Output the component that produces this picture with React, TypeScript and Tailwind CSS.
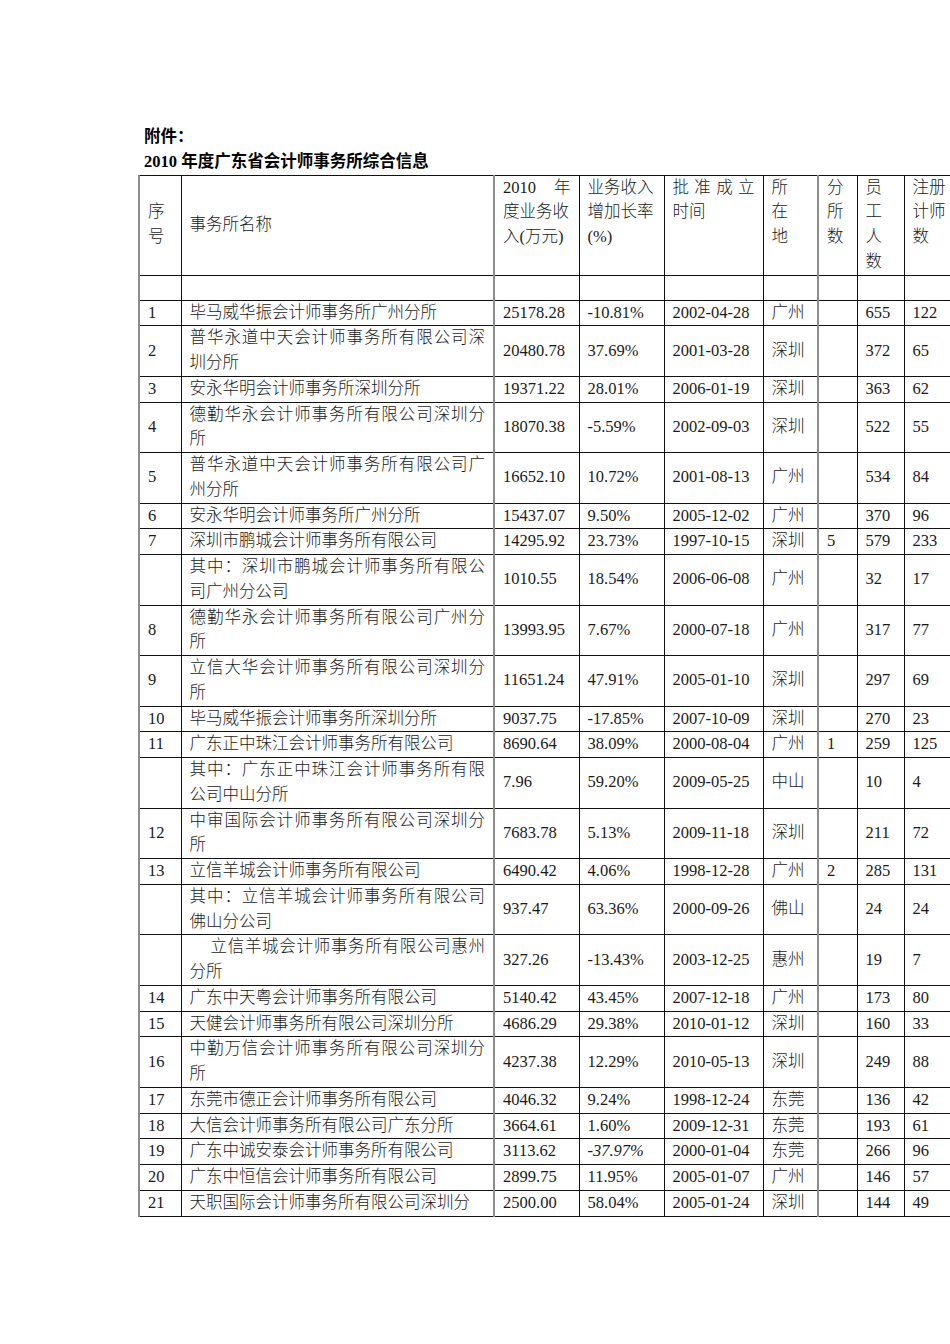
import React from 'react';

type Row = {
    no: string;
    name: string[];
    indent?: boolean;
    income: string;
    rate: string;
    italic?: boolean;
    date: string;
    city: string;
    branches?: string;
    staff: string;
    cpa: string;
};

const ROWS: Row[] = [
    { no: '1', name: ['毕马威华振会计师事务所广州分所'], income: '25178.28', rate: '-10.81%', date: '2002-04-28', city: '广州', staff: '655', cpa: '122' },
    { no: '2', name: ['普华永道中天会计师事务所有限公司深', '圳分所'], income: '20480.78', rate: '37.69%', date: '2001-03-28', city: '深圳', staff: '372', cpa: '65' },
    { no: '3', name: ['安永华明会计师事务所深圳分所'], income: '19371.22', rate: '28.01%', date: '2006-01-19', city: '深圳', staff: '363', cpa: '62' },
    { no: '4', name: ['德勤华永会计师事务所有限公司深圳分', '所'], income: '18070.38', rate: '-5.59%', date: '2002-09-03', city: '深圳', staff: '522', cpa: '55' },
    { no: '5', name: ['普华永道中天会计师事务所有限公司广', '州分所'], income: '16652.10', rate: '10.72%', date: '2001-08-13', city: '广州', staff: '534', cpa: '84' },
    { no: '6', name: ['安永华明会计师事务所广州分所'], income: '15437.07', rate: '9.50%', date: '2005-12-02', city: '广州', staff: '370', cpa: '96' },
    { no: '7', name: ['深圳市鹏城会计师事务所有限公司'], income: '14295.92', rate: '23.73%', date: '1997-10-15', city: '深圳', branches: '5', staff: '579', cpa: '233' },
    { no: '', name: ['其中：深圳市鹏城会计师事务所有限公', '司广州分公司'], income: '1010.55', rate: '18.54%', date: '2006-06-08', city: '广州', staff: '32', cpa: '17' },
    { no: '8', name: ['德勤华永会计师事务所有限公司广州分', '所'], income: '13993.95', rate: '7.67%', date: '2000-07-18', city: '广州', staff: '317', cpa: '77' },
    { no: '9', name: ['立信大华会计师事务所有限公司深圳分', '所'], income: '11651.24', rate: '47.91%', date: '2005-01-10', city: '深圳', staff: '297', cpa: '69' },
    { no: '10', name: ['毕马威华振会计师事务所深圳分所'], income: '9037.75', rate: '-17.85%', date: '2007-10-09', city: '深圳', staff: '270', cpa: '23' },
    { no: '11', name: ['广东正中珠江会计师事务所有限公司'], income: '8690.64', rate: '38.09%', date: '2000-08-04', city: '广州', branches: '1', staff: '259', cpa: '125' },
    { no: '', name: ['其中：广东正中珠江会计师事务所有限', '公司中山分所'], income: '7.96', rate: '59.20%', date: '2009-05-25', city: '中山', staff: '10', cpa: '4' },
    { no: '12', name: ['中审国际会计师事务所有限公司深圳分', '所'], income: '7683.78', rate: '5.13%', date: '2009-11-18', city: '深圳', staff: '211', cpa: '72' },
    { no: '13', name: ['立信羊城会计师事务所有限公司'], income: '6490.42', rate: '4.06%', date: '1998-12-28', city: '广州', branches: '2', staff: '285', cpa: '131' },
    { no: '', name: ['其中：立信羊城会计师事务所有限公司', '佛山分公司'], income: '937.47', rate: '63.36%', date: '2000-09-26', city: '佛山', staff: '24', cpa: '24' },
    { no: '', name: ['立信羊城会计师事务所有限公司惠州', '分所'], indent: true, income: '327.26', rate: '-13.43%', date: '2003-12-25', city: '惠州', staff: '19', cpa: '7' },
    { no: '14', name: ['广东中天粤会计师事务所有限公司'], income: '5140.42', rate: '43.45%', date: '2007-12-18', city: '广州', staff: '173', cpa: '80' },
    { no: '15', name: ['天健会计师事务所有限公司深圳分所'], income: '4686.29', rate: '29.38%', date: '2010-01-12', city: '深圳', staff: '160', cpa: '33' },
    { no: '16', name: ['中勤万信会计师事务所有限公司深圳分', '所'], income: '4237.38', rate: '12.29%', date: '2010-05-13', city: '深圳', staff: '249', cpa: '88' },
    { no: '17', name: ['东莞市德正会计师事务所有限公司'], income: '4046.32', rate: '9.24%', date: '1998-12-24', city: '东莞', staff: '136', cpa: '42' },
    { no: '18', name: ['大信会计师事务所有限公司广东分所'], income: '3664.61', rate: '1.60%', date: '2009-12-31', city: '东莞', staff: '193', cpa: '61' },
    { no: '19', name: ['广东中诚安泰会计师事务所有限公司'], income: '3113.62', rate: '-37.97%', italic: true, date: '2000-01-04', city: '东莞', staff: '266', cpa: '96' },
    { no: '20', name: ['广东中恒信会计师事务所有限公司'], income: '2899.75', rate: '11.95%', date: '2005-01-07', city: '广州', staff: '146', cpa: '57' },
    { no: '21', name: ['天职国际会计师事务所有限公司深圳分'], income: '2500.00', rate: '58.04%', date: '2005-01-24', city: '深圳', staff: '144', cpa: '49' },
];

// black 1px rules; a few columns print as a wider grey rule
const cell = 'border border-[#111] px-[8px] py-0 align-middle';
const grey = 'border-l-2 border-l-[#8c8c8c]';

const Lines = ({ lines }: { lines: string[] }) => (
    <>
        {lines.map((l, i) => (
            <div key={i}>{l}</div>
        ))}
    </>
);

const Spread = ({ parts }: { parts: string[] }) => (
    <div className="flex justify-between">
        {parts.map((p, i) => (
            <span key={i}>{p}</span>
        ))}
    </div>
);

const HeaderRow = () => (
    <tr>
        <td className={`${cell} ${grey}`}>
            <Lines lines={['序', '号']} />
        </td>
        <td className={cell}>事务所名称</td>
        <td className={`${cell} ${grey} align-top`}>
            <Spread parts={['2010', '年']} />
            <div>度业务收</div>
            <div>入(万元)</div>
        </td>
        <td className={`${cell} align-top`}>
            <Lines lines={['业务收入', '增加长率', '(%)']} />
        </td>
        <td className={`${cell} align-top`}>
            <Spread parts={['批', '准', '成', '立']} />
            <div>时间</div>
        </td>
        <td className={`${cell} align-top`}>
            <Lines lines={['所', '在', '地']} />
        </td>
        <td className={`${cell} ${grey} align-top`}>
            <Lines lines={['分', '所', '数']} />
        </td>
        <td className={`${cell} align-top`}>
            <Lines lines={['员', '工', '人', '数']} />
        </td>
        <td className={`${cell} align-top`}>
            <Lines lines={['注册', '计师', '数']} />
        </td>
    </tr>
);

const NameCell = ({ row }: { row: Row }) => (
    <td className={cell}>
        {row.name.map((l, i) => {
            const last = i === row.name.length - 1;
            return (
                <div
                    key={i}
                    className={`${!last ? '[text-align-last:justify] text-justify' : ''} ${row.indent && i === 0 ? 'pl-[21px]' : ''}`}
                >
                    {l}
                </div>
            );
        })}
    </td>
);

const DataRow = ({ row }: { row: Row }) => (
    <tr>
        <td className={`${cell} ${grey}`}>{row.no}</td>
        <NameCell row={row} />
        <td className={`${cell} ${grey}`}>{row.income}</td>
        <td className={cell}>{row.italic ? <i>{row.rate}</i> : row.rate}</td>
        <td className={cell}>{row.date}</td>
        <td className={cell}>{row.city}</td>
        <td className={`${cell} ${grey}`}>{row.branches ?? ''}</td>
        <td className={cell}>{row.staff}</td>
        <td className={cell}>{row.cpa}</td>
    </tr>
);

export default function App() {
    return (
        <div
            className="w-[950px] h-[1344px] overflow-hidden bg-white text-black text-[16.5px] leading-[24.75px]"
            style={{ fontFamily: '"Liberation Serif", "Noto Sans CJK SC", serif' }}
        >
            <div className="pt-[125px] pl-[144px] font-bold">
                <div>附件：</div>
                <div>2010 年度广东省会计师事务所综合信息</div>
            </div>
            <table className="ml-[138px] border-collapse table-fixed w-[821px] min-w-[821px] font-light text-[#1a1a1a]">
                <colgroup>
                    <col className="w-[42px]" />
                    <col className="w-[313px]" />
                    <col className="w-[85px]" />
                    <col className="w-[85px]" />
                    <col className="w-[99px]" />
                    <col className="w-[55px]" />
                    <col className="w-[39px]" />
                    <col className="w-[47px]" />
                    <col className="w-[56px]" />
                </colgroup>
                <tbody>
                    <HeaderRow />
                    <tr>
                        <td className={`${cell} ${grey} h-[25px]`}></td>
                        <td className={cell}></td>
                        <td className={`${cell} ${grey}`}></td>
                        <td className={cell}></td>
                        <td className={cell}></td>
                        <td className={cell}></td>
                        <td className={`${cell} ${grey}`}></td>
                        <td className={cell}></td>
                        <td className={cell}></td>
                    </tr>
                    {ROWS.map((row, i) => (
                        <DataRow key={i} row={row} />
                    ))}
                </tbody>
            </table>
        </div>
    );
}
